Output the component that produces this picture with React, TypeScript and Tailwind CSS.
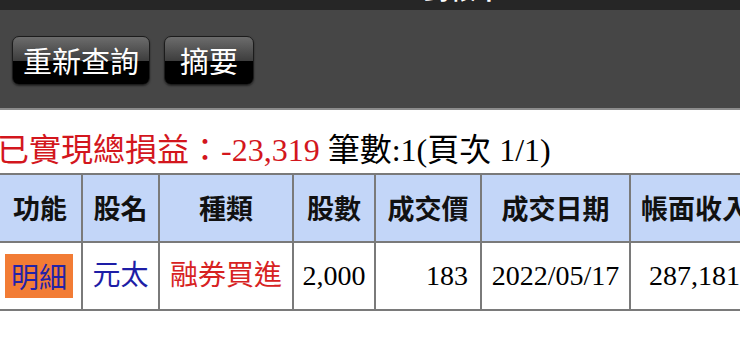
const rows = [
  { name: '元太', kind: '融券買進', qty: '2,000', price: '183', date: '2022/05/17', income: '287,181' },
];

const headers = [
  { label: '功能', w: 'w-[84px] text-center' },
  { label: '股名', w: 'w-[77px] text-center' },
  { label: '種類', w: 'w-[134px] text-center' },
  { label: '股數', w: 'w-[82px] text-center' },
  { label: '成交價', w: 'w-[106px] text-center' },
  { label: '成交日期', w: 'w-[149px] text-center' },
  { label: '帳面收入', w: 'w-[150px] text-left pl-[10px]' },
];

function GlossButton({ label, w }: { label: string; w: string }) {
  return (
    <button
      className={`${w} h-[49px] rounded-[7px] border border-[#1c1c1c] bg-[linear-gradient(to_bottom,#6c6c6c_0%,#3e3e3e_50%,#000_50%,#000_100%)] text-white text-[29px] leading-none shadow-[0_1px_2px_rgba(0,0,0,0.5)] flex items-center justify-center`}
    >
      {label}
    </button>
  );
}

export default function App() {
  return (
    <div className="w-[740px] h-[359px] overflow-hidden bg-white font-['Liberation_Serif','Noto_Sans_CJK_TC',serif]">
      {/* 標題列 (cut off) */}
      <div className="h-[10px] bg-[#262626] overflow-hidden">
        <div className="pl-[424px] -mt-[26px] text-white text-[26px] leading-[28px] font-bold font-['Noto_Sans_CJK_TC',sans-serif]">
          對帳單
        </div>
      </div>

      {/* 工具列 */}
      <div className="h-[100px] bg-[#464646] border-b-2 border-[#8c8c8c] pt-[26px] pl-[12px] flex gap-[14px] items-start font-['Noto_Sans_CJK_TC',sans-serif]">
        <GlossButton label="重新查詢" w="w-[138px]" />
        <GlossButton label="摘要" w="w-[90px]" />
      </div>

      <div className="-ml-[3px]">
        <div className="pt-[20px] h-[61px] text-[32px] leading-[40px] whitespace-nowrap">
          <span className="text-[#d3161d]">已實現總損益：-23,319</span>
          <span className="text-black"> 筆數:1(頁次 1/1)</span>
        </div>

        <table className="table-fixed border-collapse w-[782px] mt-[2px]">
          <thead>
            <tr className="h-[68px] bg-[#c3d6f8]">
              {headers.map((h) => (
                <th
                  key={h.label}
                  className={`${h.w} border-2 border-[#7a7a7a] text-[27px] font-bold text-[#111] whitespace-nowrap overflow-hidden font-['Noto_Sans_CJK_TC',sans-serif]`}
                >
                  {h.label}
                </th>
              ))}
            </tr>
          </thead>
          <tbody>
            {rows.map((r) => (
              <tr key={r.name} className="h-[68px] text-[28px]">
                <td className="border-2 border-[#7a7a7a] px-[6px]">
                  <span className="block w-[68px] h-[44px] bg-[#f27c35] text-[#2323a8] leading-[44px] text-center font-['Noto_Sans_CJK_TC',sans-serif]">
                    明細
                  </span>
                </td>
                <td className="border-2 border-[#7a7a7a] text-center text-[#1d1da6]">{r.name}</td>
                <td className="border-2 border-[#7a7a7a] text-center text-[#d72222]">{r.kind}</td>
                <td className="border-2 border-[#7a7a7a] text-center text-black">{r.qty}</td>
                <td className="border-2 border-[#7a7a7a] text-right pr-[12px] text-black">{r.price}</td>
                <td className="border-2 border-[#7a7a7a] text-center text-black">{r.date}</td>
                <td className="border-2 border-[#7a7a7a] text-left pl-[18px] text-black whitespace-nowrap">{r.income}</td>
              </tr>
            ))}
          </tbody>
        </table>
      </div>
    </div>
  );
}
